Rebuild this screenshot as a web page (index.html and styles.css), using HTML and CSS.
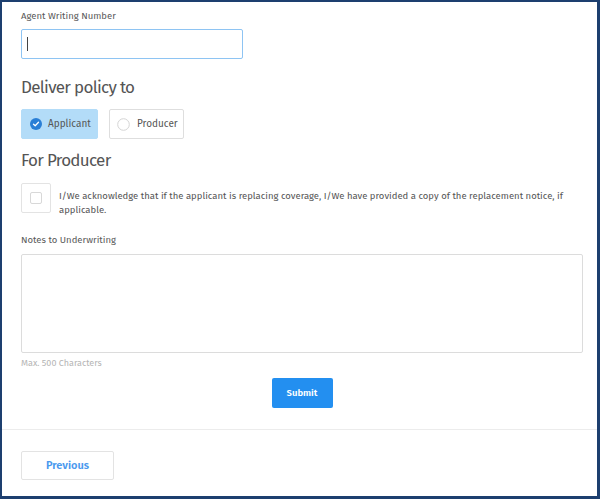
FILE: index.html
```html
<!DOCTYPE html>
<html>
<head>
<meta charset="utf-8">
<link rel="stylesheet" href="styles.css">
</head>
<body>
<div class="frame">
  <div class="content">
    <label class="field-label">Agent Writing Number</label>
    <div class="text-input"><span class="caret"></span></div>

    <h2 class="section-title first">Deliver policy to</h2>
    <div class="choices">
      <div class="choice selected">
        <svg class="radio-icon" width="12" height="12" viewBox="0 0 12 12"><circle cx="6" cy="6" r="6" fill="#2a7fd6"/><path d="M3.5 6.2 L5.2 7.8 L8.5 4.3" fill="none" stroke="#fff" stroke-width="1.3" stroke-linecap="round" stroke-linejoin="round"/></svg>
        <span>Applicant</span>
      </div>
      <div class="choice">
        <svg class="radio-icon" width="13" height="13" viewBox="0 0 13 13"><circle cx="6.5" cy="6.5" r="5.8" fill="#fff" stroke="#d4d4d4" stroke-width="1"/></svg>
        <span>Producer</span>
      </div>
    </div>

    <h2 class="section-title second">For Producer</h2>
    <div class="ack-row">
      <div class="check-box"><span class="check-inner"></span></div>
      <p class="ack-text">I/We acknowledge that if the applicant is replacing coverage, I/We have provided a copy of the replacement notice, if applicable.</p>
    </div>

    <label class="field-label notes-label">Notes to Underwriting</label>
    <div class="textarea"></div>
    <div class="hint">Max. 500 Characters</div>

    <div class="submit-row"><button class="btn-submit">Submit</button></div>
  </div>
  <div class="footer">
    <button class="btn-prev">Previous</button>
  </div>
</div>
</body>
</html>
```

FILE: styles.css
```css
* { box-sizing: border-box; }
html, body { margin: 0; padding: 0; background: #fff; }
body { font-family: "Fira Sans", "Lato", "Liberation Sans", sans-serif; color: #555; }

.frame {
  width: 600px;
  height: 499px;
  border: 2px solid #1d3f6f;
  border-right-width: 3px;
  border-bottom-width: 3px;
  display: flex;
  flex-direction: column;
  overflow: hidden;
}

.content {
  padding: 7px 14px 0 19px;
  display: flex;
  flex-direction: column;
  align-items: flex-start;
}

.field-label {
  font-size: 9.5px;
  line-height: 14px;
  color: #5a5a5a;
}

.text-input {
  margin-top: 6px;
  width: 222px;
  height: 30px;
  border: 1px solid #8ec4f3;
  border-radius: 2px;
  display: flex;
  align-items: center;
  padding-left: 5px;
}
.caret {
  width: 1px;
  height: 14px;
  background: #444;
}

.section-title {
  margin: 0;
  font-weight: 400;
  font-size: 17px;
  letter-spacing: -0.7px;
  line-height: 22px;
  color: #555;
}
.section-title.first { margin-top: 18px; }
.section-title.second { margin-top: 11px; }

.choices {
  margin-top: 10px;
  display: flex;
  gap: 11px;
}
.choice {
  height: 30px;
  display: flex;
  align-items: center;
  padding: 0 7px;
  border: 1px solid #dedede;
  border-radius: 2px;
  font-size: 10px;
  color: #555;
  background: #fff;
}
.radio-icon { flex: none; }
.choice.selected {
  width: 77px;
  gap: 6px;
  padding-left: 8px;
  background: #b3dcf8;
  border-color: #b3dcf8;
}
.choice:not(.selected) { width: 75px; gap: 7px; }

.ack-row {
  margin-top: 11px;
  display: flex;
  align-items: flex-start;
  gap: 8px;
  width: 562px;
}
.check-box {
  flex: none;
  width: 30px;
  height: 30px;
  border: 1px solid #e3e3e3;
  border-radius: 2px;
  display: flex;
  align-items: center;
  justify-content: center;
}
.check-inner {
  width: 12px;
  height: 12px;
  border: 1px solid #d8d8d8;
  border-radius: 2px;
}
.ack-text {
  margin: 6px 0 0;
  font-size: 9.5px;
  line-height: 14px;
  color: #555;
}

.notes-label { margin-top: 16px; }

.textarea {
  margin-top: 7px;
  width: 562px;
  height: 99px;
  border: 1px solid #dcdcdc;
  border-radius: 2px;
}
.hint {
  margin-top: 3px;
  font-size: 9px;
  line-height: 14px;
  color: #b5b5b5;
}

.submit-row {
  width: 562px;
  display: flex;
  justify-content: center;
  margin-top: 8px;
}
.btn-submit {
  width: 61px;
  height: 30px;
  border: none;
  border-radius: 2px;
  background: #238ff0;
  color: #fff;
  font-family: inherit;
  font-size: 9.5px;
  font-weight: 600;
}

.footer {
  margin-top: 21px;
  border-top: 1px solid #ececec;
  padding: 21px 0 0 19px;
}
.btn-prev {
  width: 93px;
  height: 29px;
  background: #fff;
  border: 1px solid #e3e3e3;
  border-radius: 2px;
  color: #4a99ee;
  font-family: inherit;
  font-size: 11px;
  font-weight: 600;
}
```
